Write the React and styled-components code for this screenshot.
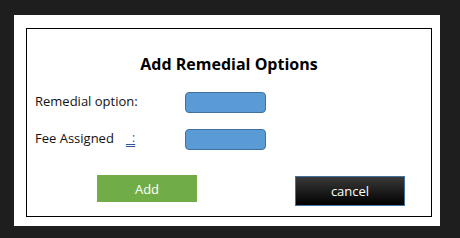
import React from "react";
import styled, { createGlobalStyle } from "styled-components";

const GlobalStyle = createGlobalStyle`
  html, body {
    margin: 0;
    padding: 0;
    background: #1e1e1e;
  }
  body {
    font-family: "Open Sans", "Liberation Sans", sans-serif;
  }
`;

const Page = styled.div`
  width: 460px;
  height: 238px;
  padding: 15px 0 0 14px;
  box-sizing: border-box;
`;

const Panel = styled.div`
  width: 426px;
  height: 211px;
  background: #ffffff;
  padding: 13px 0 0 12px;
  box-sizing: border-box;
`;

const Box = styled.div`
  width: 406px;
  height: 189px;
  border: 1px solid #000000;
  box-sizing: border-box;
  display: flex;
  flex-direction: column;
`;

const Title = styled.h2`
  margin: 23px 0 0 0;
  text-align: center;
  font-size: 16px;
  font-weight: 700;
  color: #000;
  line-height: 24px;
`;

const Row = styled.div`
  display: flex;
  align-items: center;
  padding-left: 8px;
  margin-top: ${(p) => p.$top}px;
  height: 21px;
`;

const Label = styled.div`
  width: 150px;
  font-size: 13px;
  color: #111;
  display: flex;
  align-items: center;
  padding-bottom: 4px;
`;

const Colon = styled.span`
  margin-left: 12px;
  color: #2f5597;
  font-size: 12px;
  white-space: pre;
  text-decoration: underline;
  text-decoration-style: double;
  text-underline-offset: 2px;
`;

const Field = styled.div`
  width: 81px;
  height: 21px;
  background: #5b9bd5;
  border: 1px solid #41719c;
  border-radius: 4px;
  box-sizing: border-box;
`;

const Buttons = styled.div`
  display: flex;
  align-items: flex-start;
  margin-top: 25px;
  padding-left: 70px;
`;

const AddButton = styled.div`
  width: 100px;
  height: 27px;
  background: #70ad47;
  color: #ffffff;
  font-size: 13px;
  display: flex;
  align-items: center;
  justify-content: center;
`;

const CancelButton = styled.div`
  margin-left: 98px;
  margin-top: 1px;
  width: 110px;
  height: 30px;
  box-sizing: border-box;
  border: 1px solid #41719c;
  background: linear-gradient(#3a3a3a, #000000);
  color: #ffffff;
  font-size: 13px;
  display: flex;
  align-items: center;
  justify-content: center;
`;

export default function App() {
  return (
    <Page>
      <GlobalStyle />
      <Panel>
        <Box>
          <Title>Add Remedial Options</Title>
          <Row $top={16}>
            <Label>Remedial option:</Label>
            <Field />
          </Row>
          <Row $top={16}>
            <Label>
              Fee Assigned<Colon>{"  :"}</Colon>
            </Label>
            <Field />
          </Row>
          <Buttons>
            <AddButton>Add</AddButton>
            <CancelButton>cancel</CancelButton>
          </Buttons>
        </Box>
      </Panel>
    </Page>
  );
}
